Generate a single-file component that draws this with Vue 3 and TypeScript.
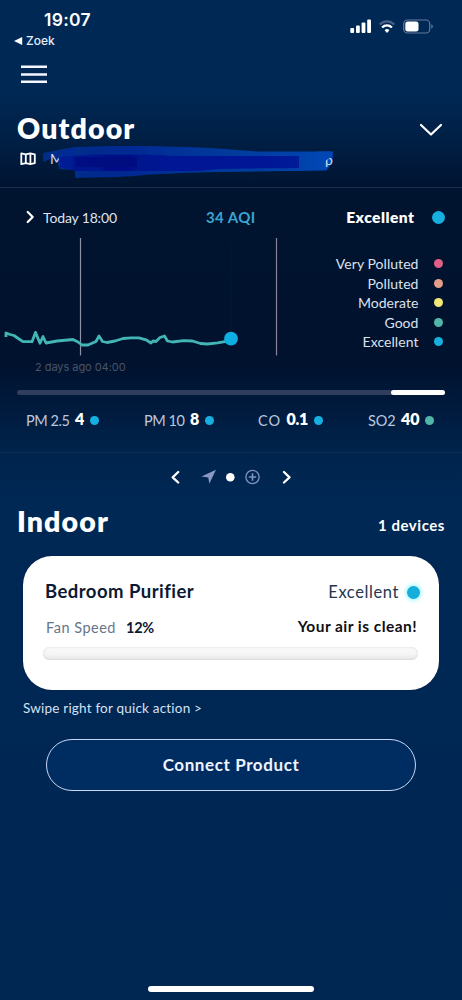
<script setup lang="ts">
interface Level { name: string; tone: string }
interface Reading { label: string; value: string; tone: string }

const levels: Level[] = [
  { name: 'Very Polluted', tone: 'rose' },
  { name: 'Polluted', tone: 'peach' },
  { name: 'Moderate', tone: 'yellow' },
  { name: 'Good', tone: 'teal' },
  { name: 'Excellent', tone: 'blue' },
]

const readings: Reading[] = [
  { label: 'PM 2.5', value: '4', tone: 'blue' },
  { label: 'PM 10', value: '8', tone: 'blue' },
  { label: 'CO', value: '0.1', tone: 'blue' },
  { label: 'SO2', value: '40', tone: 'teal' },
]
</script>

<template>
  <main class="screen">
    <header class="status">
      <div class="clock-block">
        <div class="clock">19:07</div>
        <div class="back">
          <svg width="9" height="8" viewBox="0 0 9 8"><path d="M0 4 8.200 0v8z" fill="#fff" /></svg>
          <span>Zoek</span>
        </div>
      </div>
      <svg class="indicators" width="84" height="18" viewBox="0 0 84 18">
        <g fill="#fff">
          <rect x="0.3" y="10" width="3.8" height="5" rx="1" />
          <rect x="6" y="7.5" width="3.8" height="7.5" rx="1" />
          <rect x="11.6" y="4.5" width="3.8" height="10.5" rx="1" />
          <rect x="17.2" y="1.5" width="3.8" height="13.500" rx="1" />
          <path d="M34.600 12.300a3.300 3.300 0 0 1 4.800 0L37 15z" />
        </g>
        <path d="M29.800 6.500c4.200-4.200 10.200-4.200 14.400 0" fill="none" stroke="#4a5f88" stroke-width="2.200" />
        <path d="M32.100 9.500c2.900-2.800 6.900-2.800 9.800 0" fill="none" stroke="#fff" stroke-width="2.400" />
        <rect x="53.700" y="2" width="26" height="13" rx="3.800" fill="none" stroke="#65799b" stroke-width="1.200" />
        <rect x="55.300" y="3.500" width="13.200" height="10" rx="2.300" fill="#fff" />
        <path d="M81.300 6.300c2 .8 2 3.700 0 4.500z" fill="#65799b" />
      </svg>
    </header>

    <button class="menu" aria-label="Menu">
      <svg width="26" height="19" viewBox="0 0 26 19"><path d="M0 1.800h26M0 9.500h26M0 16.700h26" stroke="#f4f7ff" stroke-width="2.500" /></svg>
    </button>

    <section class="outdoor-head">
      <div class="title-row">
        <h1>Outdoor</h1>
        <svg width="24" height="14" viewBox="0 0 24 14"><path d="M2 2l10 9.500L22 2" fill="none" stroke="#fff" stroke-width="2.200" stroke-linecap="round" stroke-linejoin="round" /></svg>
      </div>
      <svg class="place" width="340" height="36" viewBox="0 144 340 36">
        <defs>
          <linearGradient id="ink" x1="0" x2="1">
            <stop offset="0" stop-color="#052f86" />
            <stop offset=".3" stop-color="#032a93" />
            <stop offset=".65" stop-color="#043a9c" />
            <stop offset="1" stop-color="#0447b3" />
          </linearGradient>
          <linearGradient id="ink-core" x1="0" x2="1">
            <stop offset="0" stop-color="#031d95" />
            <stop offset=".22" stop-color="#010f86" />
            <stop offset=".45" stop-color="#021694" />
            <stop offset="1" stop-color="#021a98" />
          </linearGradient>
          <filter id="soften" x="-5%" y="-20%" width="110%" height="140%"><feGaussianBlur stdDeviation=".6" /></filter>
        </defs>
        <g fill="none" stroke="#fff" stroke-width="1.800" stroke-linejoin="round">
          <path d="M21.300 153.300l4.500 1 4.500-1 4.500 1v8.900l-4.500 1-4.500-1-4.500 1z" />
          <path d="M25.800 154.300v9M30.400 153.300v10.500" />
        </g>
        <g filter="url(#soften)">
          <path d="M43 153l18-3.500 14-2.500c35-1.500 75-1.500 110 0c40 1 55 4 75 4.500l73 0-.5 10-6 9-106 1.500c-30 .5-60 1.500-82 3.500-20 2-40 1.500-63 2.500l-1-8-15-1-2-7-4-5-10 5z" fill="url(#ink)" />
        </g>
        <text class="place-text" x="50" y="164">M</text>
        <text class="place-text" x="325" y="164.500">p</text>
        <g filter="url(#soften)">
          <path d="M57 154l7-4 12-2v18l-14 2z" fill="#042a94" />
          <path d="M317 151.500h14l-2 2.500 1 4-5 3-.500 6-7.500 2z" fill="#0447b3" />
          <path d="M60 157c30-3 70-3 115-1h124v12l-80 1-20 2h-123l-16-4z" fill="url(#ink-core)" />
          <path d="M75 157h62v10h-62z" fill="#010b7c" opacity=".6" />
        </g>
      </svg>
    </section>

    <section class="air">
      <div class="summary">
        <svg width="9" height="14" viewBox="0 0 9 14"><path d="M1.700 2l5 5-5 5" fill="none" stroke="#fff" stroke-width="2.200" stroke-linecap="round" stroke-linejoin="round" /></svg>
        <span class="when">Today 18:00</span>
        <span class="aqi">34 AQI</span>
        <strong>Excellent</strong>
        <i class="dot large blue"></i>
      </div>

      <div class="history">
        <svg width="300" height="144" viewBox="0 234 300 144">
          <path d="M80.500 238v117.500" stroke="#8e91a4" stroke-width="1.200" />
          <path d="M276.500 238v117.500" stroke="#8b8298" stroke-width="1.200" />
          <path d="M230.500 240v95" stroke="#031932" stroke-width="1" />
          <path d="M6 337v-4l4 1.500 4 1 5 3.500 4 2.700h9l3.500-9.300 4.500 10.800 3-6.700 3 6.500 11-2 16-1.500 5 2.500 4 3h6l8-3.500 3-5.500 3.500 5.500 4.500 1 8-1.500 8-2.500 8-.7 8 0 7 2 5 3.200 2-2 3 .5 4-4 4.500-1.500 3 5 5 1 11-1.300 9 .3 8 2.500 7 .5 10-1.200 9-1.500 8-.7" fill="none" stroke="#43b5b5" stroke-width="2.800" stroke-linejoin="round" />
          <circle cx="231" cy="338.700" r="6.900" fill="#0eafe2" />
          <text class="chart-label" x="35" y="370.500">2 days ago 04:00</text>
        </svg>
        <ul class="legend">
          <li v-for="level in levels" :key="level.name">
            <span>{{ level.name }}</span><i class="dot" :class="level.tone"></i>
          </li>
        </ul>
      </div>

      <div class="scroll"><i></i></div>

      <div class="readings">
        <div v-for="item in readings" :key="item.label" class="reading">
          <span>{{ item.label }}</span><b>{{ item.value }}</b><i class="dot" :class="item.tone"></i>
        </div>
      </div>
    </section>

    <nav class="pager">
      <svg width="122" height="18" viewBox="170 468 122 18">
        <g fill="none" stroke="#fff" stroke-width="2.300" stroke-linecap="round" stroke-linejoin="round">
          <path d="M178.200 472l-5.500 5.300 5.500 5.200M284 472l5.500 5.300-5.500 5.200" />
        </g>
        <path d="M216 469.700l-14.500 6.800 6.800 1 1 6.300z" fill="#8a98c3" />
        <circle cx="230.300" cy="477.300" r="4.300" fill="#fff" />
        <g fill="none" stroke="#7f93c2" stroke-width="1.300"><circle cx="252.500" cy="477" r="6.600" /><path d="M248.800 477h7.400M252.500 473.300v7.400" stroke-width="1.600" /></g>
      </svg>
    </nav>

    <section class="indoor-head">
      <h2>Indoor</h2>
      <span>1 devices</span>
    </section>

    <article class="device">
      <div class="device-row name-row">
        <h3>Bedroom Purifier</h3>
        <div class="quality"><span>Excellent</span><i></i></div>
      </div>
      <div class="device-row fan-row">
        <div><span class="fan">Fan Speed</span><b>12%</b></div>
        <strong>Your air is clean!</strong>
      </div>
      <div class="track"></div>
    </article>

    <p class="hint">Swipe right for quick action &gt;</p>
    <button class="connect">Connect Product</button>
    <div class="home"></div>
  </main>
</template>

<style>
body { background: #002752; }
</style>

<style scoped>
* { box-sizing: border-box; }
h1, h2, h3, p, ul { margin: 0; padding: 0; }
svg { display: block; flex: none; }
button { padding: 0; border: 0; background: none; font: inherit; color: inherit; }
.screen {
  width: 462px;
  height: 1000px;
  display: flex;
  flex-direction: column;
  overflow: hidden;
  color: #fff;
  font-family: Lato, "Open Sans", sans-serif;
  white-space: nowrap;
  background: linear-gradient(#002855 0, #002854 95px, #001d41 150px, #00132f 190px, #00122e 365px, #001b3e 410px, #00244c 453px, #002855 500px, #002752 1000px);
}
.status { height: 54px; display: flex; justify-content: space-between; padding: 8px 28px 0 14px; font-family: Inter, sans-serif; }
.clock { margin-left: 30px; font-size: 17.500px; line-height: 23px; font-weight: 600; letter-spacing: .3px; }
.back { display: flex; align-items: center; gap: 3px; font-size: 12px; line-height: 19px; font-weight: 500; color: #e6edfa; }
.indicators { margin-top: 10px; }
.menu { width: 26px; height: 19px; margin: 11px 0 0 21px; }
.outdoor-head { height: 104px; border-bottom: 1px solid #1b3050; padding-top: 28px; }
.title-row { display: flex; align-items: center; justify-content: space-between; height: 32px; padding: 0 19px 0 17px; }
h1, h2 { font-size: 28.500px; line-height: 34px; font-weight: 800; letter-spacing: 1.1px; }
.title-row svg { margin-top: 4px; }
.place-text { font-size: 14px; fill: #cfdcf5; }
.air { height: 265px; border-bottom: 1px solid #0b2e57; }
.summary { height: 46px; padding: 12px 17px 0 26px; display: flex; align-items: center; }
.when { width: 163px; margin-left: 8px; font-size: 14px; letter-spacing: -.15px; color: #dfe3ee; }
.aqi { font-size: 15px; font-weight: 700; color: #3ba5cf; letter-spacing: .4px; }
.summary strong { margin-left: auto; font-size: 15.500px; letter-spacing: .5px; font-weight: 800; }
.dot { display: block; flex: none; width: 9px; height: 9px; border-radius: 50%; }
.large { width: 13px; height: 13px; margin-left: 17.500px; }
.rose { background: #df5f87; }
.peach { background: #e59c88; }
.yellow { background: #f3e778; }
.teal { background: #52b5a9; }
.blue { background: #16afe0; }
.history { display: flex; height: 144px; }
.legend { list-style: none; width: 142.500px; padding-top: 20px; }
.legend li { display: flex; align-items: center; justify-content: flex-end; gap: 15px; height: 19.500px; font-size: 14px; letter-spacing: .05px; color: #dde1ed; }
.chart-label { font-family: Inter, sans-serif; font-size: 11px; letter-spacing: -.05px; fill: #4b5368; }
.scroll { margin: 12px 17px 0; height: 5px; border-radius: 3px; background: #303e5b; display: flex; justify-content: flex-end; }
.scroll i { width: 54px; height: 5px; border-radius: 3px; background: #fff; }
.readings { display: grid; grid-template-columns: 118px 114px 110px auto; padding: 13px 24px 0 26px; }
.reading { display: flex; align-items: center; height: 24px; font-size: 14.500px; letter-spacing: -.45px; color: #bdc7dd; }
.reading b { margin: 0 6px 2px 5.500px; font-size: 16px; line-height: 20px; font-weight: 800; letter-spacing: -.2px; color: #fff; }
.reading:nth-child(3) span { letter-spacing: .9px; }
.reading:nth-child(4) span { letter-spacing: -.1px; }
.pager { height: 49px; display: flex; justify-content: center; padding-top: 15px; }
.indoor-head { height: 55px; display: flex; justify-content: space-between; padding: 2px 17px 0; }
.indoor-head span { font-size: 15px; font-weight: 700; line-height: 43px; letter-spacing: .55px; }
.device { height: 134px; margin: -1px 23px 0; padding: 21px 21px; border-radius: 29px; background: #fff; color: #0c1932; box-shadow: 0 0 1px #001330; flex: none; }
.device-row { display: flex; justify-content: space-between; align-items: center; }
.name-row { height: 28px; padding: 0 1px; }
h3 { font-size: 18.500px; font-weight: 700; line-height: 24px; letter-spacing: .45px; }
.quality { display: flex; align-items: center; gap: 8px; font-size: 16.500px; letter-spacing: .6px; color: #263653; padding-top: 2px; margin-right: -3px; }
.quality i { width: 13px; height: 13px; border-radius: 50%; background: #15add9; box-shadow: 0 0 5px 1px #8ff3ff; }
.fan-row { height: 41px; padding: 1px 1px 0 2px; }
.fan { margin-right: 10px; font-size: 14.500px; color: #66758a; letter-spacing: .5px; }
.fan-row b { font-size: 14.500px; letter-spacing: -.2px; }
.fan-row strong { font-size: 15.500px; color: #101014; letter-spacing: .45px; }
.track { height: 13px; margin: 1px 0 0 -1px; border-radius: 7px; background: linear-gradient(#fafafa, #f5f5f5 55%, #e5e5e5); box-shadow: inset 0 0 2px #ccc; }
.hint { height: 49px; padding: 8px 23px 0; font-size: 13.500px; line-height: 21px; letter-spacing: .2px; color: #d5e0f4; }
.connect { width: 370px; height: 52px; margin: 0 46px; padding-bottom: 2px; border: 1.500px solid #c8d7f4; border-radius: 26px; background: #002d61; font-size: 17px; font-weight: 700; letter-spacing: .6px; color: #f0f4ff; flex: none; }
.home { width: 166px; height: 6px; margin: auto auto 8px 148px; border-radius: 3px; background: #fff; flex: none; }
</style>
